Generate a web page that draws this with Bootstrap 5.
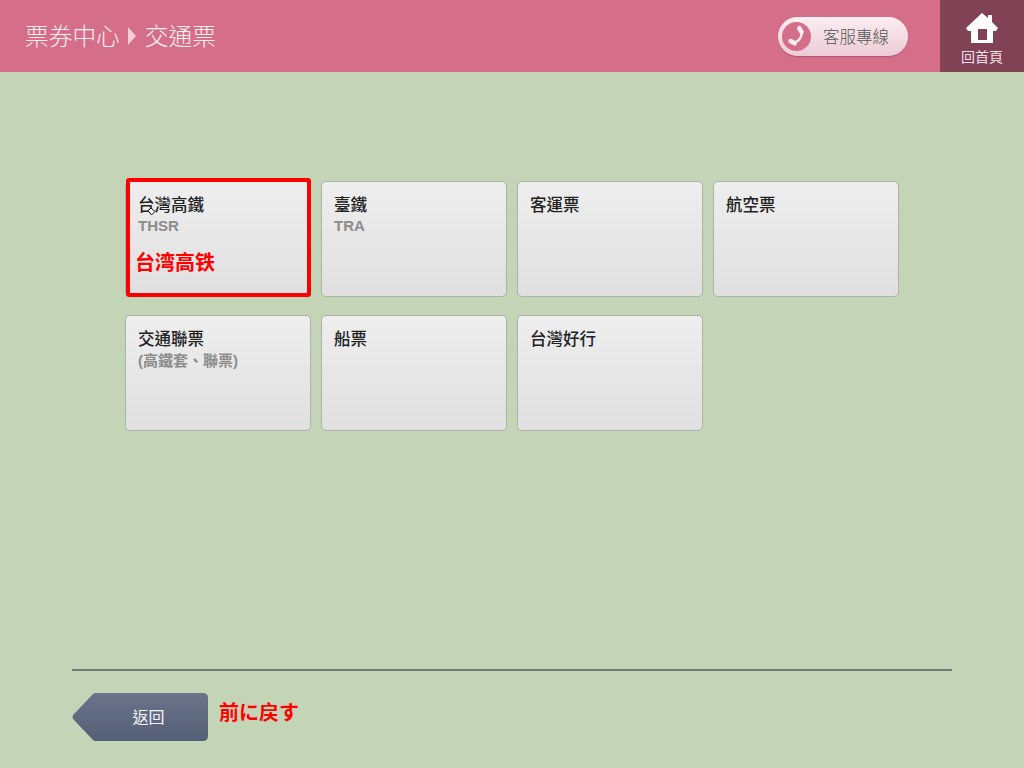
<!DOCTYPE html>
<html lang="zh-Hant">
<head>
<meta charset="utf-8">
<title>交通票</title>
<link href="https://cdn.jsdelivr.net/npm/bootstrap@5.3.0/dist/css/bootstrap.min.css" rel="stylesheet">
<style>
html,body{height:100%}
body{background:#c4d4b7;font-family:"Liberation Sans","Noto Sans CJK TC",sans-serif;overflow:hidden}
.shell{width:1024px;height:768px}
.topbar{height:72px;background:#d56e89}
.crumb{font-size:23.7px;font-weight:300;color:#fbeef1;padding-left:25px;font-family:"Noto Sans CJK TC",sans-serif}
.crumb svg{margin:0 9px 0 8px}
.hotline{width:130px;height:39px;border-radius:20px;background:linear-gradient(#fbeef2,#eccbd5);margin-right:32px;padding-left:4px;box-shadow:0 1px 1px rgba(120,50,70,.4);color:#555;font-size:16.5px;font-family:"Noto Sans CJK TC",sans-serif;font-weight:300}
.phone-dot{width:29px;height:29px;border-radius:50%;background:#d56e89;margin-right:12px}
.homebtn{width:84px;height:72px;background:#824256;color:#f1dfe4;font-size:14px;padding-top:13px;font-family:"Noto Sans CJK TC",sans-serif;line-height:1;font-weight:400}
.homebtn span{margin-top:6px}
.tile-area{padding:109px 125px 0;gap:18px 10px;display:grid;grid-template-columns:repeat(4,186px);grid-auto-rows:116px}
.tile{position:relative;border:1px solid #acb3a8;border-radius:5px;background:linear-gradient(#eeeeee,#e0e0e0);padding:10px 12px;font-family:"Noto Sans CJK TC",sans-serif}
.tile-name{font-size:16.5px;line-height:24px;color:#222;font-weight:500}
.tile-sub{font-size:15px;line-height:18px;margin-top:1px;color:#8c8c8c;font-weight:700;font-family:"Liberation Sans","Noto Sans CJK TC",sans-serif}
.tile-sub-cjk{margin-top:2px}
.focus-box{position:absolute;left:0;top:-4px;width:185px;height:119px;border:4px solid #f00;border-radius:3px}
.note{color:#f00;font-weight:700;font-size:20px;line-height:24px;font-family:"Noto Sans CJK SC",sans-serif}
.note-tile{position:absolute;left:9px;top:68px}
.pointer-mark{position:absolute;left:21px;top:25px}
.bottom{margin:0 72px;height:99px;border-top:2px solid #6f7a6e;padding-top:22px;gap:11px}
.backbtn{width:136px;height:48px;background:linear-gradient(#6a7389,#555f75);color:#f3f4f6;font-size:16px;line-height:1;padding:0 0 2px 17px;font-family:"Noto Sans CJK TC",sans-serif;font-weight:400;clip-path:path("M2 21 L21 1 Q22 0 24 0 H131 Q136 0 136 5 V43 Q136 48 131 48 H24 Q22 48 21 47 L2 27 Q-1 24 2 21Z")}
.note-back{font-family:"Noto Sans CJK JP",sans-serif;margin-top:7px}
</style>
</head>
<body>
<div class="shell d-flex flex-column">
  <header class="topbar d-flex align-items-center flex-shrink-0">
    <div class="crumb flex-grow-1 d-flex align-items-center"><span>票券中心</span><svg width="8" height="18" viewBox="0 0 8 18"><path d="M0 0 8 9 0 18Z" fill="#f6ccd7"/></svg><span>交通票</span></div>
    <div class="hotline d-flex align-items-center">
      <span class="phone-dot d-flex align-items-center justify-content-center">
        <svg width="22" height="22" viewBox="0 0 24 24" fill="none" stroke="#fbeef2" stroke-linecap="round"><path d="M16 5C19 11 15 18 7 19.500" stroke-width="2.600"/><path d="M14.500 3.500 17 7.500" stroke-width="5"/><path d="M5 17.500 9.500 20" stroke-width="5"/></svg>
      </span>
      <span>客服專線</span>
    </div>
    <a class="homebtn d-flex flex-column align-items-center text-decoration-none" href="#">
      <svg width="32" height="30" viewBox="0 0 32 30"><path fill-rule="evenodd" d="M16 0 22 5V2h4V9l6 6-2 3H27V30H5V18H2L0 15ZM12 16H21V27H12Z" fill="#fff"/></svg>
      <span>回首頁</span>
    </a>
  </header>
  <main class="tile-area flex-grow-1">
    <div class="tile"><div class="tile-name">台灣高鐵</div><div class="tile-sub">THSR</div><div class="note note-tile">台湾高铁</div><div class="focus-box"></div><svg class="pointer-mark" width="9" height="9" viewBox="0 0 9 9"><path d="M1 3.500 4.500 8 8 4.500 4 1Z" fill="#fff" stroke="#111"/></svg></div>
    <div class="tile"><div class="tile-name">臺鐵</div><div class="tile-sub">TRA</div></div>
    <div class="tile"><div class="tile-name">客運票</div></div>
    <div class="tile"><div class="tile-name">航空票</div></div>
    <div class="tile"><div class="tile-name">交通聯票</div><div class="tile-sub tile-sub-cjk">(高鐵套、聯票)</div></div>
    <div class="tile"><div class="tile-name">船票</div></div>
    <div class="tile"><div class="tile-name">台灣好行</div></div>
  </main>
  <footer class="bottom d-flex align-items-start flex-shrink-0">
    <a class="backbtn d-flex align-items-center justify-content-center text-decoration-none" href="#">返回</a>
    <div class="note note-back">前に戻す</div>
  </footer>
</div>
</body>
</html>
